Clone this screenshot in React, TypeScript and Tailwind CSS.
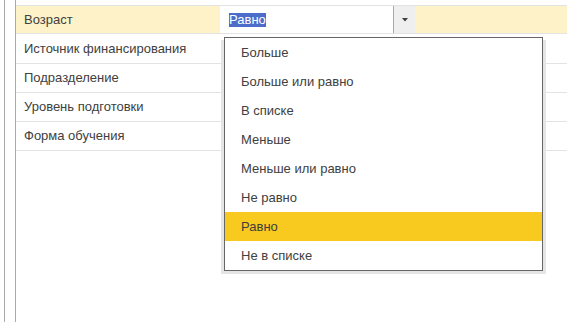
import React from "react";

const rows = ["Источник финансирования", "Подразделение", "Уровень подготовки", "Форма обучения"];

const options = [
  "Больше",
  "Больше или равно",
  "В списке",
  "Меньше",
  "Меньше или равно",
  "Не равно",
  "Равно",
  "Не в списке",
];

export default function App() {
  const selected = "Равно";
  return (
    <div
      className="relative flex h-[322px] w-[567px] overflow-hidden bg-white text-[13px] text-[#404040]"
      style={{ fontFamily: '"Liberation Sans", Arial, sans-serif' }}
    >
      <div className="w-[4px] shrink-0" />
      <div className="w-[11px] shrink-0 border-l border-[#a9a9a9]" />
      <div className="flex-1 border-l border-[#a9a9a9]">
        <div className="mt-[5px] border-t border-[#e3e3e3]">
          {/* active row */}
          <div className="flex h-[28px] border-b border-[#e3e3e3]">
            <div className="flex w-[204px] items-center bg-[#fdf2c8] pl-[8px]">Возраст</div>
            <div className="w-[1px] bg-white" />
            <div className="flex w-[172px] items-center bg-white pl-[8px]">
              <span className="bg-[#4b6cc9] leading-[14px] text-white">Равно</span>
            </div>
            <div className="flex w-[22px] items-center justify-center border-l border-[#a9a9a9] bg-[#efefef]">
              <svg width="6" height="4" viewBox="0 0 6 4">
                <path d="M0 0h6L3 3.5z" fill="#404040" />
              </svg>
            </div>
            <div className="flex-1 bg-[#fdf2c8]" />
          </div>
          {rows.map((r, i) => (
            <div
              key={r}
              className={`flex items-center border-b border-[#e3e3e3] pl-[8px] ${i === 0 ? "h-[30px]" : "h-[29px]"}`}
            >
              {r}
            </div>
          ))}
        </div>
      </div>

      {/* dropdown list */}
      <div className="absolute left-[224px] top-[37px] w-[319px] border border-[#666666] bg-white shadow-[-3px_3px_0_0_#e5e5e5,3px_3px_0_0_#e5e5e5]">
        {options.map((o) => (
          <div
            key={o}
            className={`flex h-[29px] items-center pl-[16px] ${o === selected ? "bg-[#f8ca1f]" : ""}`}
          >
            {o}
          </div>
        ))}
      </div>
    </div>
  );
}
